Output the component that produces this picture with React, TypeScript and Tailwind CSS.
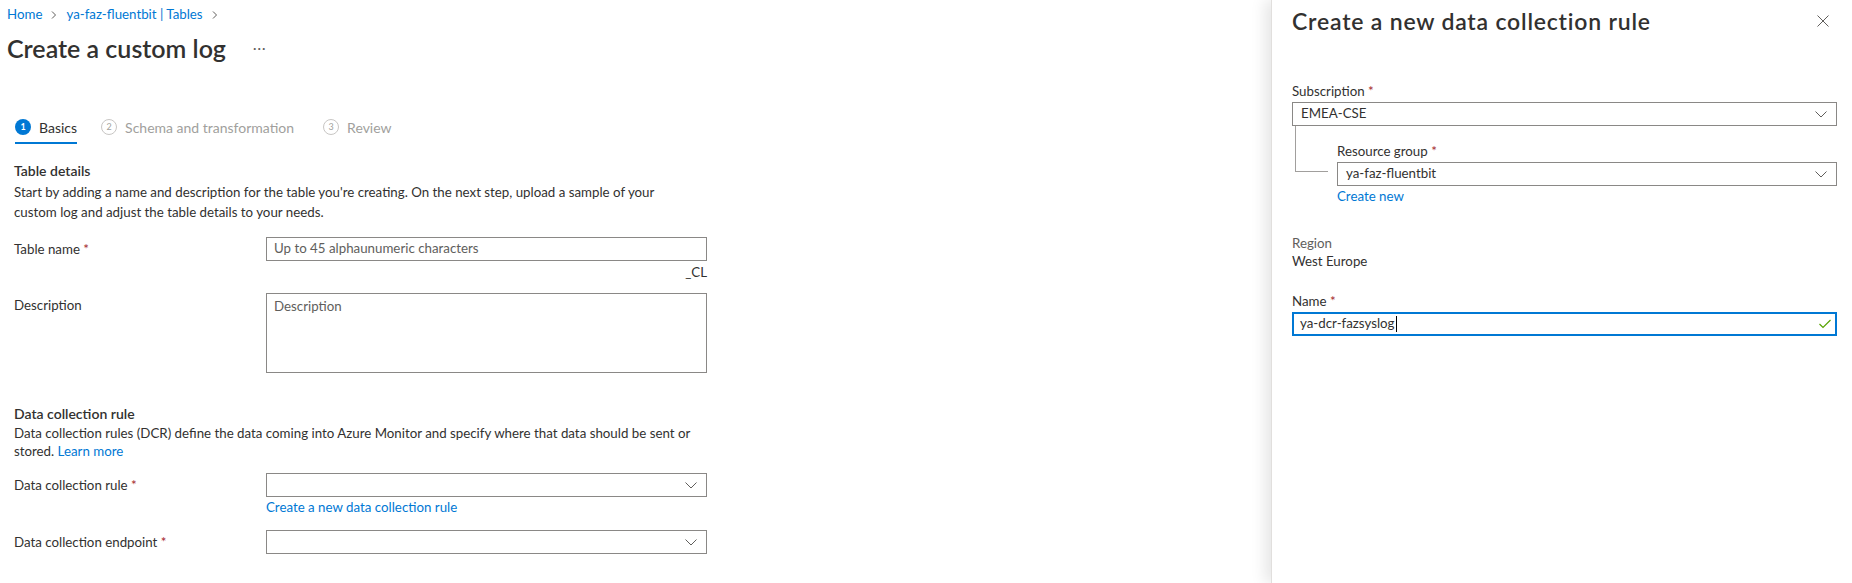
import React from "react";

const Req = () => <span className="text-[#a4262c]"> *</span>;

function ChevronDown() {
  return (
    <svg width="12" height="12" viewBox="0 0 12 12" className="shrink-0">
      <path d="M0.5 3.5 L6 9 L11.5 3.5" fill="none" stroke="#605e5c" strokeWidth="1" />
    </svg>
  );
}

function Crumb() {
  return (
    <svg width="6" height="10" viewBox="0 0 6 10" className="mx-[9px]">
      <path d="M1 1.5 L4.5 5 L1 8.5" fill="none" stroke="#605e5c" strokeWidth="1" />
    </svg>
  );
}

function Dropdown({ value }: { value?: string }) {
  return (
    <div className="flex h-[24px] w-full items-center justify-between border border-[#8a8886] pl-[8px] pr-[9px]">
      <span>{value}</span>
      <ChevronDown />
    </div>
  );
}

function FormRow({ label, children }: { label: React.ReactNode; children: React.ReactNode }) {
  return (
    <div className="flex">
      <div className="w-[252px] shrink-0 leading-[24px]">{label}</div>
      <div className="w-[441px]">{children}</div>
    </div>
  );
}

function Tab({ n, label, active }: { n: number; label: string; active?: boolean }) {
  return (
    <div
      className={
        "flex h-full items-center gap-[8px] border-b-2 " +
        (active ? "border-[#0078d4] text-[#323130]" : "border-transparent text-[#a19f9d]")
      }
    >
      {active ? (
        <span className="flex h-[16px] w-[16px] items-center justify-center rounded-full bg-[#0078d4] text-[9px] font-bold text-white">
          {n}
        </span>
      ) : (
        <span className="flex h-[16px] w-[16px] items-center justify-center rounded-full border border-[#c8c6c4] text-[9px] text-[#a19f9d]">
          {n}
        </span>
      )}
      <span className="text-[14px]">{label}</span>
    </div>
  );
}

export default function App() {
  return (
    <div className="flex h-[583px] w-[1852px] overflow-hidden bg-white font-['Segoe_UI','Lato','Liberation_Sans',sans-serif] text-[13.3px] text-[#323130]">
      <main className="min-w-0 flex-1">
        <nav className="flex h-[30px] items-center pl-[7px] text-[#0078d4]">
          <span>Home</span>
          <Crumb />
          <span>ya-faz-fluentbit | Tables</span>
          <Crumb />
        </nav>

        <div className="flex h-[38px] items-center pl-[7px]">
          <h1 className="text-[25px] font-semibold">Create a custom log</h1>
          <span className="ml-[27px] tracking-[1px] text-[#605e5c]">···</span>
        </div>

        <div className="mt-[44px] flex h-[32px] pl-[15px]">
          <Tab n={1} label="Basics" active />
          <div className="ml-[24px] h-full">
            <Tab n={2} label="Schema and transformation" />
          </div>
          <div className="ml-[29px] h-full">
            <Tab n={3} label="Review" />
          </div>
        </div>

        <section className="w-[707px] pl-[14px]">
          <h2 className="mt-[17px] text-[14px] font-semibold leading-[20px]">Table details</h2>
          <p className="mt-[1px] leading-[20px]">
            Start by adding a name and description for the table you're creating. On the next step, upload a sample of your
            <br />
            custom log and adjust the table details to your needs.
          </p>

          <div className="mt-[15px]">
            <FormRow
              label={
                <>
                  Table name
                  <Req />
                </>
              }
            >
              <div className="flex h-[24px] items-center border border-[#8a8886] pl-[7px] text-[#605e5c]">
                Up to 45 alphaunumeric characters
              </div>
              <div className="mt-[2px] text-right leading-[18px]">_CL</div>
            </FormRow>
          </div>

          <div className="mt-[12px]">
            <FormRow label="Description">
              <div className="h-[80px] border border-[#8a8886] pl-[7px] pt-[3px] leading-[18px] text-[#605e5c]">
                Description
              </div>
            </FormRow>
          </div>

          <h2 className="mt-[31px] text-[14px] font-semibold leading-[20px]">Data collection rule</h2>
          <p className="leading-[18px]">
            Data collection rules (DCR) define the data coming into Azure Monitor and specify where that data should be sent or
            <br />
            stored. <span className="text-[#0078d4]">Learn more</span>
          </p>

          <div className="mt-[13px]">
            <FormRow
              label={
                <>
                  Data collection rule
                  <Req />
                </>
              }
            >
              <Dropdown />
              <div className="mt-[1px] leading-[18px] text-[#0078d4]">Create a new data collection rule</div>
            </FormRow>
          </div>

          <div className="mt-[14px]">
            <FormRow
              label={
                <>
                  Data collection endpoint
                  <Req />
                </>
              }
            >
              <Dropdown />
            </FormRow>
          </div>
        </section>
      </main>

      <aside className="relative z-10 w-[581px] shrink-0 border-l border-[#e1dfdd] bg-white pl-[20px] pr-[15px] shadow-[-6px_0_14px_rgba(0,0,0,0.10)]">
        <div className="mt-[7px] flex h-[28px] items-center justify-between">
          <h2 className="text-[23px] font-semibold tracking-[0.8px]">Create a new data collection rule</h2>
          <svg width="12" height="12" viewBox="0 0 12 12" className="mr-[8px]">
            <path d="M0.5 0.5 L11.5 11.5 M11.5 0.5 L0.5 11.5" stroke="#605e5c" strokeWidth="1" />
          </svg>
        </div>

        <div className="mt-[47px] leading-[18px]">
          Subscription
          <Req />
        </div>
        <div className="mt-[2px]">
          <Dropdown value="EMEA-CSE" />
        </div>

        <div className="flex">
          <div className="w-[45px] shrink-0">
            <div className="ml-[3px] h-[46px] w-[33px] border-b border-l border-[#a19f9d]" />
          </div>
          <div className="flex-1">
            <div className="mt-[16px] leading-[18px]">
              Resource group
              <Req />
            </div>
            <div className="mt-[2px]">
              <Dropdown value="ya-faz-fluentbit" />
            </div>
            <div className="mt-[1px] leading-[18px] text-[#0078d4]">Create new</div>
          </div>
        </div>

        <div className="mt-[29px] leading-[18px] text-[#605e5c]">Region</div>
        <div className="leading-[18px]">West Europe</div>

        <div className="mt-[22px] leading-[18px]">
          Name
          <Req />
        </div>
        <div className="mt-[2px] flex h-[24px] items-center justify-between border-2 border-[#0078d4] pl-[6px] pr-[4px]">
          <span className="flex items-center">
            ya-dcr-fazsyslog
            <span className="ml-[1px] inline-block h-[16px] w-[1px] bg-black" />
          </span>
          <svg width="12" height="10" viewBox="0 0 12 10">
            <path d="M0.5 5 L4 8.5 L11.5 1" fill="none" stroke="#57a300" strokeWidth="1.2" />
          </svg>
        </div>
      </aside>
    </div>
  );
}
